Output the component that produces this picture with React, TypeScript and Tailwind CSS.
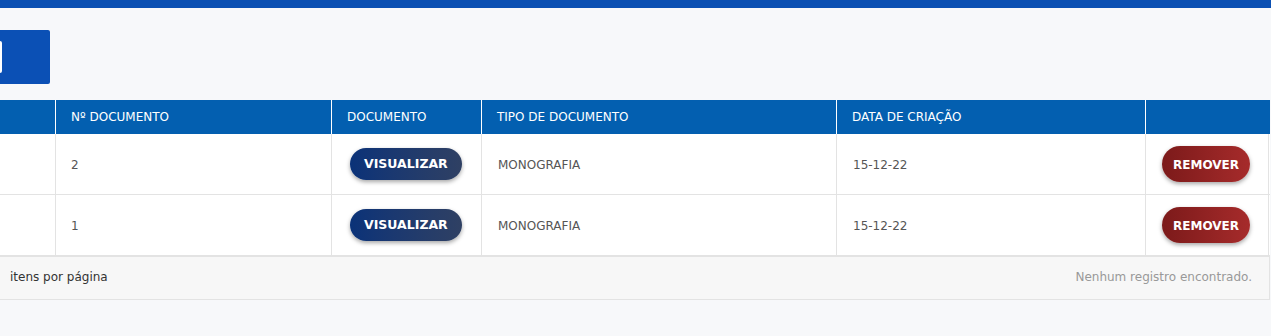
interface DocRow {
  numero: string;
  tipo: string;
  criadoEm: string;
}

const rows: DocRow[] = [
  { numero: "2", tipo: "MONOGRAFIA", criadoEm: "15-12-22" },
  { numero: "1", tipo: "MONOGRAFIA", criadoEm: "15-12-22" },
];

const cols = "grid grid-cols-[56px_276px_150px_355px_309px_123px]";

const App = () => {
  return (
    <div
      className="min-h-[336px] bg-[#f7f8fa] text-[12px]"
      style={{ fontFamily: '"DejaVu Sans", Verdana, sans-serif' }}
    >
      <div className="h-[8px] bg-[#0b50b3]" />

      <div className="pt-[22px] pb-[16px]">
        <button className="flex h-[54px] w-[50px] items-center rounded-r-[2px] bg-[#0b50b5]">
          {/* edge of the icon that is scrolled out of view */}
          <span className="h-[32px] w-[2px] rounded-r-full bg-white" />
        </button>
      </div>

      <div className="w-[1270px]">
        <div className={`${cols} h-[34px] bg-[#035fb0] text-white`}>
          <div className="border-r border-white" />
          <div className="flex items-center border-r border-white pl-[15px]">Nº DOCUMENTO</div>
          <div className="flex items-center border-r border-white pl-[15px]">DOCUMENTO</div>
          <div className="flex items-center border-r border-white pl-[15px]">TIPO DE DOCUMENTO</div>
          <div className="flex items-center border-r border-white pl-[15px]">DATA DE CRIAÇÃO</div>
          <div />
        </div>

        {rows.map((row, i) => (
          <div
            key={i}
            className={`${cols} h-[61px] border-b border-[#e3e3e3] bg-white text-[#555]`}
          >
            <div className="border-r border-[#e3e3e3]" />
            <div className="flex items-center border-r border-[#e3e3e3] pl-[15px] pt-[2px]">{row.numero}</div>
            <div className="flex items-center border-r border-[#e3e3e3] pl-[18px]">
              <button className="h-[32px] rounded-full bg-gradient-to-r from-[#0a3278] to-[#2f4063] px-[14px] pt-[1px] text-[12.5px] font-bold text-white shadow-[0_2px_4px_rgba(0,0,0,0.35)]">
                VISUALIZAR
              </button>
            </div>
            <div className="flex items-center border-r border-[#e3e3e3] pl-[16px] pt-[2px]">{row.tipo}</div>
            <div className="flex items-center border-r border-[#e3e3e3] pl-[16px] pt-[2px]">{row.criadoEm}</div>
            <div className="flex items-center justify-end border-r border-[#e3e3e3] pr-[18px]">
              <button className="h-[36px] rounded-full bg-gradient-to-r from-[#7c1a1a] to-[#a62b2b] px-[11px] pt-[1px] font-bold text-white shadow-[0_2px_4px_rgba(0,0,0,0.35)]">
                REMOVER
              </button>
            </div>
          </div>
        ))}

        <div className="flex h-[44px] items-center justify-between border-t border-b border-r border-[#e3e3e3] bg-[#f7f7f7] pb-[3px] pl-[10px] pr-[17px]">
          <span className="text-[#333]">itens por página</span>
          <span className="text-[#999]">Nenhum registro encontrado.</span>
        </div>
      </div>
    </div>
  );
};

export default App;
